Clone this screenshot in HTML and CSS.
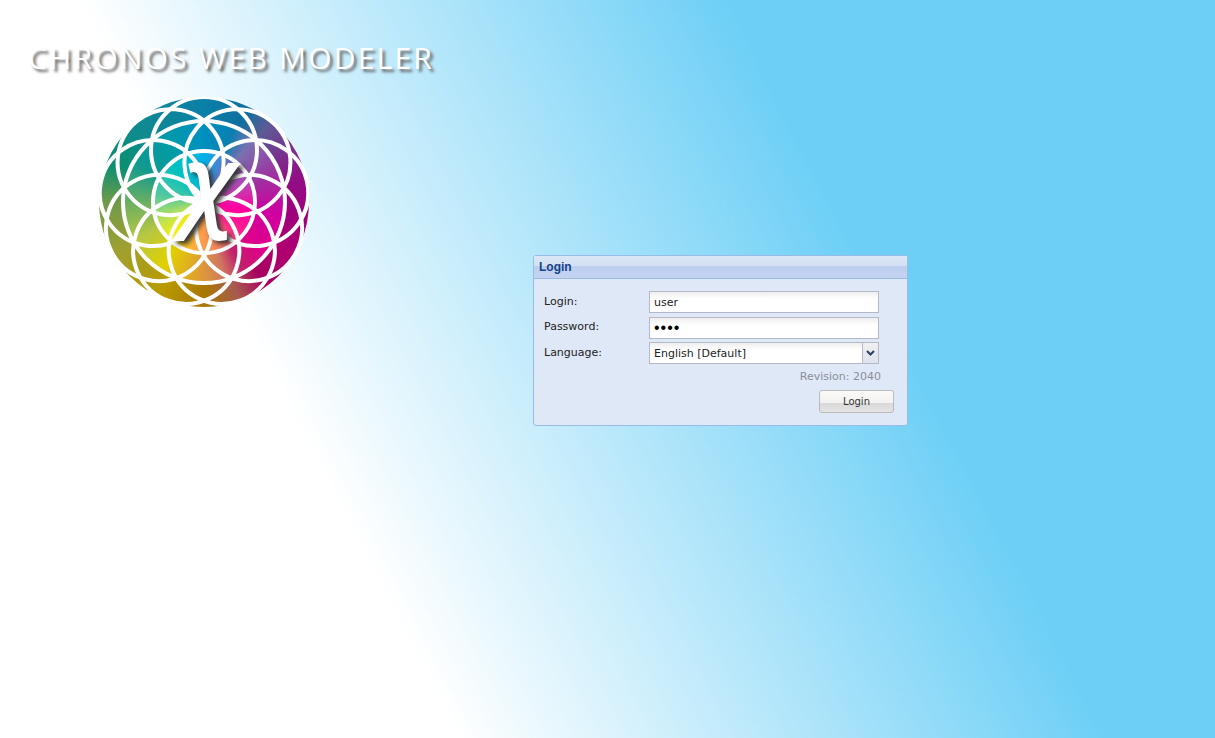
FILE: index.html

```html
<!DOCTYPE html>
<html lang="en">
<head>
  <meta charset="UTF-8">
  <title>Chronos Web Modeler</title>
  <link rel="stylesheet" href="styles.css">
</head>
<body>

<div class="page">
  <div class="brand">
    <div class="brand-title">CHRONOS WEB MODELER</div>
    <div class="logo">
      <div class="logo-disc"></div>
      <svg class="logo-lines" width="210" height="210" viewBox="-105 -105 210 210">
        <g fill="none" stroke="#fff" stroke-width="4">
          <circle r="81"/>
          <circle r="51"/>
          <circle r="53" cy="-52"/>
          <circle r="53" cy="-52" transform="rotate(40)"/>
          <circle r="53" cy="-52" transform="rotate(80)"/>
          <circle r="53" cy="-52" transform="rotate(120)"/>
          <circle r="53" cy="-52" transform="rotate(160)"/>
          <circle r="53" cy="-52" transform="rotate(200)"/>
          <circle r="53" cy="-52" transform="rotate(240)"/>
          <circle r="53" cy="-52" transform="rotate(280)"/>
          <circle r="53" cy="-52" transform="rotate(320)"/>
        </g>
      </svg>
      <span class="logo-chi">χ</span>
    </div>
  </div>

  <form class="login-panel" onsubmit="return false">
    <div class="panel-header">Login</div>
    <div class="panel-body">
      <div class="form-row">
        <label for="login">Login:</label>
        <input class="field" type="text" id="login" value="user">
      </div>
      <div class="form-row">
        <label for="password">Password:</label>
        <input class="field field-pass" type="password" id="password" value="user">
      </div>
      <div class="form-row">
        <label for="language">Language:</label>
        <div class="combo">
          <input class="field" type="text" id="language" value="English [Default]" readonly>
          <div class="combo-trigger">
            <svg width="9" height="6" viewBox="0 0 9 6"><path d="M1 1l3.500 3.500L8 1" fill="none" stroke="#2f3f63" stroke-width="2"/></svg>
          </div>
        </div>
      </div>
      <div class="revision">Revision: 2040</div>
      <div class="panel-buttons">
        <button class="login-btn" type="submit">Login</button>
      </div>
    </div>
  </form>
</div>

</body>
</html>
```

FILE: styles.css

```css
html, body { height: 100%; }
body {
  margin: 0;
  font-family: "DejaVu Sans", sans-serif;
  font-size: 11px;
  background: linear-gradient(62.8deg, #fff 28.7%, #6dcff6 69.6%);
  overflow: hidden;
}
.page { display: flex; align-items: flex-start; }

.brand { width: 533px; flex: none; padding: 39px 0 0 28px; box-sizing: border-box; }
.brand-title {
  font-family: "Open Sans", sans-serif;
  font-weight: 400;
  font-size: 30px;
  line-height: 38px;
  letter-spacing: 2.2px;
  white-space: nowrap;
  color: #fff;
  text-shadow: 3px 3px 3px #666;
}

.logo { position: relative; width: 210px; height: 210px; margin: 20px 0 0 71px; }
.logo-disc {
  position: relative;
  width: 100%;
  height: 100%;
  border-radius: 50%;
  background: conic-gradient(#0a7fa8 0deg, #0f6f9e 25deg, #5d5a96 40deg, #900f85 75deg, #a0007c 100deg,
    #b00070 120deg, #a80060 143deg, #a85a50 160deg, #a87800 180deg, #b89a00 205deg, #a0a030 240deg,
    #6f9a4a 270deg, #0a9070 292deg, #0f8a90 320deg, #0a7fa8 360deg);
}
.logo-disc::before, .logo-disc::after {
  content: "";
  position: absolute;
  border-radius: 50%;
}
.logo-disc::before {
  inset: 24px;
  background: conic-gradient(#0090c0 0deg, #0a80b0 22deg, #7a70b0 38deg, #a02fa0 70deg, #d000a0 100deg,
    #e0008a 130deg, #c0206a 150deg, #d07860 165deg, #e0a030 185deg, #e0d000 212deg, #b8c840 240deg,
    #70b060 268deg, #109a90 300deg, #009aa8 330deg, #0090c0 360deg);
}
.logo-disc::after {
  inset: 54px;
  background: conic-gradient(#00b0e8 0deg, #8060c0 40deg, #c040b0 70deg, #ff00a0 100deg, #ff2090 130deg,
    #f08060 160deg, #ffa840 190deg, #fff000 220deg, #b0e060 250deg, #50c8a0 280deg, #00c0c0 320deg, #00b0e8 360deg);
}
.logo-lines { position: absolute; left: 0; top: 0; }
.logo-chi {
  position: absolute;
  left: 84px;
  top: 1px;
  font-family: "Open Sans", sans-serif;
  font-style: italic;
  font-weight: 600;
  font-size: 100px;
  line-height: 160px;
  color: #fff;
  text-shadow: 4px 3px 5px #333;
}

.login-panel {
  width: 375px;
  height: 171px;
  margin-top: 255px;
  box-sizing: border-box;
  background: #dfe8f6;
  border: 1px solid #99bbe8;
  border-radius: 3px;
}
.panel-header {
  height: 23px;
  line-height: 22px;
  padding-left: 5px;
  box-sizing: border-box;
  font-weight: bold;
  font-size: 12px;
  font-family: "Liberation Sans", sans-serif;
  color: #15428b;
  border-bottom: 1px solid #99bbe8;
  background: linear-gradient(#dae7f6 0, #d3e0f3 45%, #bdcfee 46%, #c3d3f0 100%);
}
.panel-body { padding: 12px 13px 0 10px; }
.form-row { display: flex; align-items: center; height: 22px; margin-bottom: 3.5px; }
.form-row label { width: 105px; flex: none; color: #222; position: relative; top: -1px; }
.field {
  width: 230px;
  height: 22px;
  box-sizing: border-box;
  margin: 0;
  padding: 1px 4px 0;
  border: 1px solid #b5b8c8;
  background: #fff linear-gradient(#eeeeee, #fff 7px);
  font-family: inherit;
  font-size: 11px;
  color: #222;
  outline: none;
}
.field-pass { color: #000; font-family: "Liberation Sans", sans-serif; font-size: 16px; letter-spacing: 1px; }
.combo { display: flex; width: 230px; }
.combo .field { flex: 1; width: auto; min-width: 0; border-right: 0; }
.combo-trigger {
  width: 17px;
  height: 22px;
  flex: none;
  box-sizing: border-box;
  display: flex;
  align-items: center;
  justify-content: center;
  border: 1px solid #b5b8c8;
  background: linear-gradient(#f0f0f2, #dfe3ec);
}
.revision { width: 337px; color: #8a8f99; text-align: right; line-height: 14px; margin-top: 5.5px; }
.panel-buttons { display: flex; justify-content: flex-end; margin-top: 6px; }
.login-btn {
  width: 75px;
  height: 23px;
  padding: 1px 0 0;
  border: 1px solid #bbb;
  border-radius: 3px;
  background: linear-gradient(#fbfaf8 0, #f3f2f0 55%, #d8d8d8 56%, #e4e4e4 100%);
  font-family: inherit;
  font-size: 10px;
  color: #333;
  cursor: pointer;
}
```
